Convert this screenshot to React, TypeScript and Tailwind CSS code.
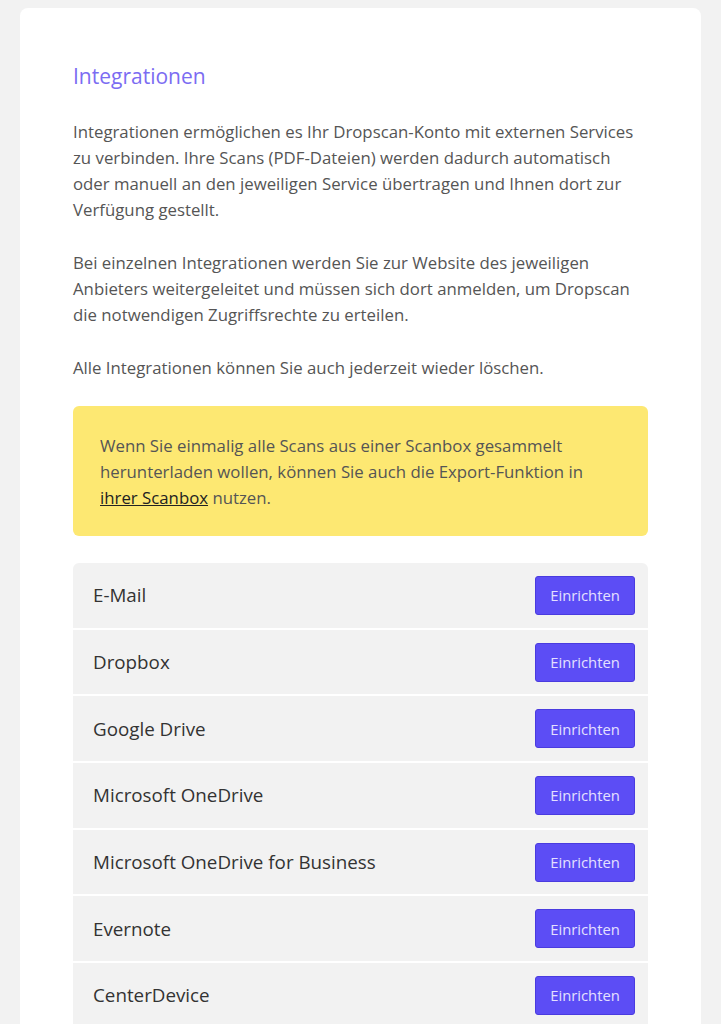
import React from 'react';

export default function App() {
  const services = [
    'E-Mail',
    'Dropbox',
    'Google Drive',
    'Microsoft OneDrive',
    'Microsoft OneDrive for Business',
    'Evernote',
    'CenterDevice',
  ];

  return (
    <div className="min-h-screen bg-[#f2f2f2] px-5 pt-2 font-['Open_Sans',sans-serif]">
      <div className="bg-white rounded-lg px-[53px] pt-[48px] pb-10">
        <h1 className="text-[21px] leading-[40px] text-[#7b6cf2] mb-[23px]">Integrationen</h1>

        <div className="text-[16.8px] leading-[26px] text-[#555] space-y-[27px]">
          <p>
            Integrationen ermöglichen es Ihr Dropscan-Konto mit externen Services zu verbinden. Ihre Scans
            (PDF-Dateien) werden dadurch automatisch oder manuell an den jeweiligen Service übertragen und Ihnen
            dort zur Verfügung gestellt.
          </p>
          <p>
            Bei einzelnen Integrationen werden Sie zur Website des jeweiligen Anbieters weitergeleitet und müssen
            sich dort anmelden, um Dropscan die notwendigen Zugriffsrechte zu erteilen.
          </p>
          <p>Alle Integrationen können Sie auch jederzeit wieder löschen.</p>
        </div>

        <div className="mt-[25px] bg-[#fde872] rounded-md px-[27px] pt-[27px] pb-[25px] text-[16.8px] leading-[26px] text-[#555]">
          Wenn Sie einmalig alle Scans aus einer Scanbox gesammelt herunterladen wollen, können Sie auch die
          Export-Funktion in <span className="underline text-[#222]">ihrer Scanbox</span> nutzen.
        </div>

        <div className="mt-[27px] rounded-t-md overflow-hidden flex flex-col gap-[2px]">
          {services.map((name) => (
            <div key={name} className="flex items-center justify-between bg-[#f2f2f2] h-[64.7px] pl-5 pr-[13px]">
              <span className="text-[18.8px] text-[#333]">{name}</span>
              <button className="w-[100px] h-[39px] rounded-[3px] bg-[#5c4df5] border border-[#4a3bdf] text-[14.8px] text-[#e4e0ff]">
                Einrichten
              </button>
            </div>
          ))}
        </div>
      </div>
    </div>
  );
}
